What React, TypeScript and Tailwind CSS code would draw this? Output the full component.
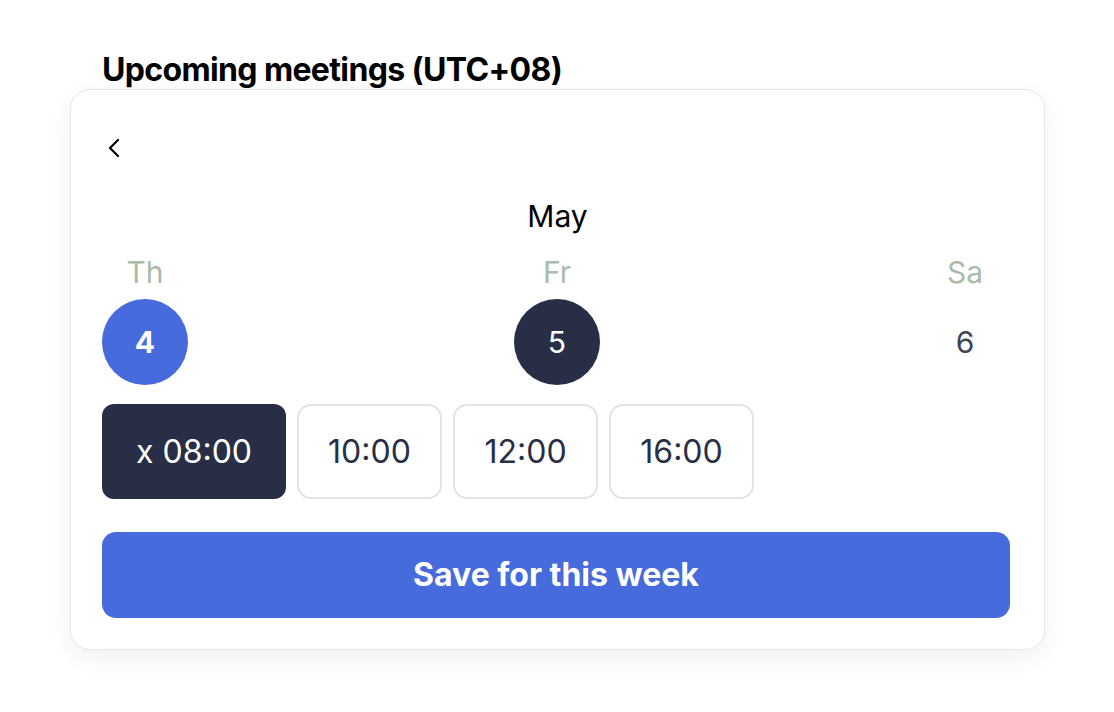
import React from 'react';

const days = [
    { name: 'Th', date: 4, style: 'bg-[#476bdc] text-white font-bold', place: 'justify-self-start' },
    { name: 'Fr', date: 5, style: 'bg-[#282e45] text-white', place: 'justify-self-center ml-[2px]' },
    { name: 'Sa', date: 6, style: 'text-[#3d4457]', place: 'justify-self-end mr-[2px]' },
];

const slots = ['10:00', '12:00', '16:00'];

export default function App() {
    return (
        <div className="min-h-screen bg-white pt-[51px] pl-[70px] font-['Inter',sans-serif]">
            <h1 className="pl-[32px] text-[32px] leading-[38px] font-bold tracking-[-0.02em] text-black">
                Upcoming meetings (UTC+08)
            </h1>
            <div className="w-[975px] rounded-[20px] border border-[#e6e6e6] bg-white px-[31px] pt-[47px] pb-[31px] shadow-[0_8px_24px_rgba(0,0,0,0.06)]">
                <button className="ml-[5px] flex h-[22px] w-[14px] items-center text-black">
                    <svg width="14" height="22" viewBox="0 0 14 22" fill="none" stroke="currentColor" strokeWidth="2.2" strokeLinecap="round" strokeLinejoin="round">
                        <path d="M11 3 L3 11 L11 19" />
                    </svg>
                </button>
                <div className="mt-[40px] text-center text-[30px] leading-[34px] text-black">May</div>
                <div className="mt-[22px] grid w-[908px] grid-cols-3">
                    {days.map((d) => (
                        <div key={d.name} className={`flex w-[86px] flex-col items-center ${d.place}`}>
                            <div className="text-[30px] leading-[34px] text-[#a9bca9]">{d.name}</div>
                            <div className={`mt-[10px] flex h-[86px] w-[86px] items-center justify-center rounded-full text-[30px] ${d.style}`}>
                                {d.date}
                            </div>
                        </div>
                    ))}
                </div>
                <div className="mt-[19px] flex gap-[11px]">
                    <button className="flex h-[95px] w-[184px] items-center justify-center rounded-[12px] bg-[#282e45] text-[32px] text-white">
                        x 08:00
                    </button>
                    {slots.map((s) => (
                        <button
                            key={s}
                            className="flex h-[95px] w-[145px] items-center justify-center rounded-[14px] border-2 border-[#e3e3e3] bg-white text-[32px] text-[#282e45]"
                        >
                            {s}
                        </button>
                    ))}
                </div>
                <button className="mt-[33px] flex h-[86px] w-[908px] items-center justify-center rounded-[14px] bg-[#476bdc] text-[32px] font-bold text-white">
                    Save for this week
                </button>
            </div>
        </div>
    );
}
